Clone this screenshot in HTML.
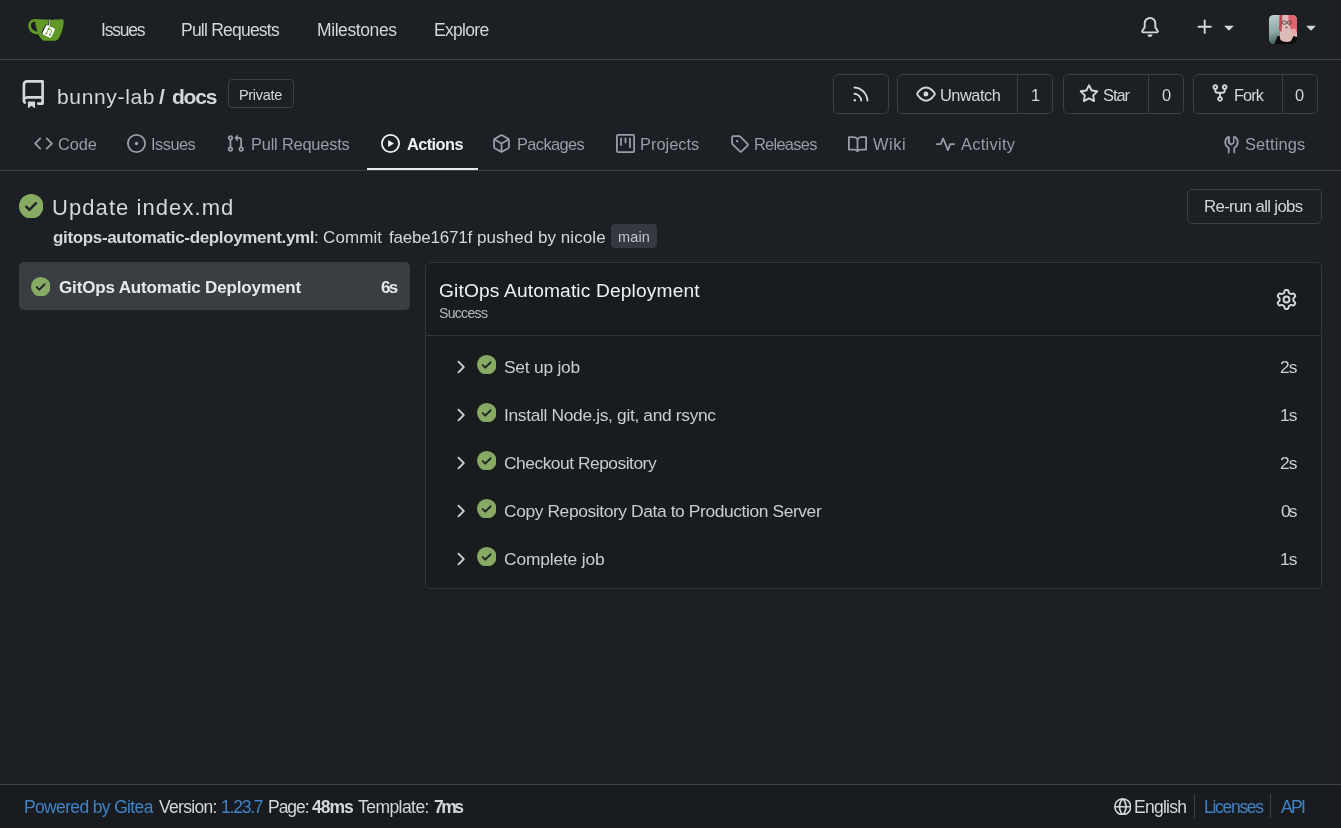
<!DOCTYPE html>
<html><head><meta charset="utf-8"><title>Update index.md - docs - Gitea</title>
<style>
html,body{margin:0;padding:0;width:1341px;height:828px;overflow:hidden;background:#1c1f23;}
body{position:relative;font-family:"Liberation Sans",sans-serif;}
.t{position:absolute;white-space:pre;line-height:1;will-change:transform;}
.b{position:absolute;}
.i{position:absolute;display:block;}
</style></head><body>
<div class="b" style="left:0px;top:0px;width:1341px;height:59px;background:#1c1f23;border-radius:0px;"></div>
<div class="b" style="left:0px;top:59px;width:1341px;height:1px;background:#3a4048;border-radius:0px;"></div>
<div class="b" style="left:0px;top:170px;width:1341px;height:1px;background:#3a4048;border-radius:0px;"></div>
<div class="b" style="left:367px;top:167.5px;width:111px;height:2.5px;background:#e6e9ec;border-radius:0px;"></div>
<div class="b" style="left:0px;top:784px;width:1341px;height:44px;background:#181b1f;border-radius:0px;"></div>
<div class="b" style="left:0px;top:784px;width:1341px;height:1px;background:#3a4048;border-radius:0px;"></div>
<svg class="i" style="left:27.8px;top:10.9px" width="36" height="36" viewBox="0 0 640 640"><path fill="#fff" d="m395.9 484.2-126.9-61c-12.5-6-17.9-21.2-11.8-33.8l61-126.9c6-12.5 21.2-17.9 33.8-11.8 17.2 8.3 27.1 13 27.1 13l-.1-109.2 16.7-.1.1 117.1s57.4 24.2 83.1 40.1c3.7 2.3 10.2 6.8 12.9 14.4 2.1 6.1 2 13.1-1 19.3l-61 126.9c-6.2 12.7-21.4 18.1-33.9 12"/><path fill="#609926" d="M622.7 149.8c-4.1-4.1-9.6-4-9.6-4s-117.2 6.6-177.9 8c-13.3.3-26.5.6-39.6.7v117.2c-5.5-2.6-11.1-5.3-16.6-7.900 0-36.4-.1-109.2-.1-109.2-29 .4-89.2-2.2-89.2-2.2s-141.4-7.1-156.8-8.5c-9.8-.6-22.5-2.1-39 1.5-8.7 1.8-33.5 7.4-53.8 26.9C-4.9 212.4 6.6 276.2 8 285.8c1.7 11.7 6.9 44.2 31.7 72.5 45.8 56.1 144.4 54.8 144.4 54.8s12.1 28.9 30.6 55.5c25 33.1 50.7 58.9 75.7 62 63 0 188.9-.1 188.9-.1s12 .1 28.3-10.3c14-8.5 26.5-23.4 26.5-23.4S547 483 565 451.5c5.5-9.7 10.1-19.1 14.1-28 0 0 55.2-117.1 55.2-231.1-1.1-34.5-9.6-40.6-11.6-42.6M125.6 353.9c-25.9-8.5-36.9-18.7-36.9-18.7S69.6 321.8 60 295.4c-16.5-44.2-1.4-71.2-1.4-71.2s8.4-22.5 38.5-30c13.8-3.7 31-3.1 31-3.1s7.1 59.4 15.7 94.2c7.2 29.2 24.8 77.7 24.8 77.7s-26.1-3.1-43-9.1m289.8 107.9c-6.2 12.7-21.4 18.1-33.9 12l-126.9-61c-12.5-6-17.9-21.2-11.8-33.8l61-126.9c6-12.5 21.2-17.9 33.8-11.8 17.2 8.3 27.1 13 27.1 13l-.1-109.2 16.7-.1.1 117.1s57.4 24.2 83.1 40.1c3.7 2.3 10.2 6.8 12.9 14.4 2.1 6.1 2 13.1-1 19.3z"/><path fill="#609926" d="M326.8 380.1c-8.2.1-15.4 5.8-17.3 13.8s2 16.3 9.1 20c7.7 4 17.5 1.8 22.7-5.4 5.1-7.1 4.3-16.9-1.8-23.1l24-49.1c1.5.1 3.7.2 6.2-.5 4.1-.9 7.1-3.6 7.1-3.6 4.2 1.8 8.6 3.8 13.2 6.1 4.8 2.4 9.3 4.9 13.4 7.3.9.5 1.8 1.1 2.8 1.9 1.6 1.3 3.4 3.1 4.7 5.5 1.9 5.5-1.9 14.9-1.9 14.9-2.3 7.6-18.4 40.6-18.4 40.6-8.1-.2-15.3 5-17.7 12.5-2.6 8.1 1.1 17.3 8.9 21.3s17.4 1.7 22.5-5.3c5-6.8 4.6-16.3-1.1-22.6 1.9-3.7 3.7-7.4 5.6-11.3 5-10.4 13.5-30.4 13.5-30.4.9-1.7 5.7-10.3 2.7-21.3-2.5-11.4-12.6-16.7-12.6-16.7-12.2-7.9-29.2-15.2-29.2-15.2s0-4.1-1.1-7.1-2.8-5.1-3.9-6.3c4.7-9.7 9.4-19.3 14.1-29-4.1-2-8.1-4-12.2-6.1-4.8 9.8-9.7 19.7-14.5 29.5-6.7-.1-12.9 3.5-16.1 9.4-3.4 6.3-2.7 14.1 1.9 19.8z"/></svg>
<svg class="i" style="left:1269px;top:15px" width="28" height="29" viewBox="0 0 28 29">
<defs><clipPath id="av"><rect x="0" y="0" width="28" height="29" rx="4.5"/></clipPath>
<linearGradient id="avbg" x1="0" y1="0" x2="0.3" y2="1"><stop offset="0" stop-color="#c0d2d0"/><stop offset="0.6" stop-color="#8aa6a3"/><stop offset="1" stop-color="#3e5654"/></linearGradient>
<filter id="avb" x="-20%" y="-20%" width="140%" height="140%"><feGaussianBlur stdDeviation="0.6"/></filter></defs>
<g clip-path="url(#av)">
<rect width="28" height="29" fill="url(#avbg)"/>
<g filter="url(#avb)">
<rect x="11" y="-2" width="19" height="33" fill="#dcbcb6"/>
<path d="M10.5 0 L13.5 0 L12.5 17 L10 15 Z" fill="#b84858"/>
<path d="M19 -1 L28 -1 L28 17 L24 18 L20 10 Z" fill="#e0636e"/>
<ellipse cx="25" cy="17" rx="2.5" ry="3.5" fill="#e9a8ae"/>
<ellipse cx="15.4" cy="7.6" rx="2.2" ry="1.7" fill="none" stroke="#3a3232" stroke-width="0.8"/>
<ellipse cx="20.4" cy="7.6" rx="2.2" ry="1.7" fill="none" stroke="#3a3232" stroke-width="0.8"/>
<ellipse cx="17.5" cy="12.5" rx="1.4" ry="0.7" fill="#80557a"/>
<path d="M5 30 L8.5 21 L10.5 21 L11.5 25 Q16 28.5 22 26 L24.5 21 L28 22 L28 30 Z" fill="#101010"/>
</g></g></svg>
<div class="b" style="left:227.5px;top:79.3px;width:66.10000000000002px;height:29.200000000000003px;background:transparent;border:1px solid #3a4048;box-sizing:border-box;border-radius:4px;"></div>
<div class="b" style="left:833px;top:74px;width:56px;height:40px;background:transparent;border:1px solid #3a4048;box-sizing:border-box;border-radius:5px;"></div>
<div class="b" style="left:897px;top:74px;width:156px;height:40px;background:transparent;border:1px solid #3a4048;box-sizing:border-box;border-radius:5px;"></div>
<div class="b" style="left:1017px;top:74px;width:1px;height:40px;background:#3a4048;border-radius:0px;"></div>
<div class="b" style="left:1062.5px;top:74px;width:121.5px;height:40px;background:transparent;border:1px solid #3a4048;box-sizing:border-box;border-radius:5px;"></div>
<div class="b" style="left:1148px;top:74px;width:1px;height:40px;background:#3a4048;border-radius:0px;"></div>
<div class="b" style="left:1193.3px;top:74px;width:124.70000000000005px;height:40px;background:transparent;border:1px solid #3a4048;box-sizing:border-box;border-radius:5px;"></div>
<div class="b" style="left:1281.5px;top:74px;width:1.0px;height:40px;background:#3a4048;border-radius:0px;"></div>
<div class="b" style="left:1187px;top:188.5px;width:135px;height:35.5px;background:transparent;border:1px solid #3a4048;box-sizing:border-box;border-radius:5px;"></div>
<div class="b" style="left:611px;top:224px;width:46px;height:24px;background:#353a42;border-radius:4px;"></div>
<svg class="i" style="left:18.75px;top:193.75px" width="24.5" height="24.5" viewBox="0 0 16 16"><circle cx="8" cy="8" r="8" fill="#87ab63"/><path fill="none" stroke="#1f2328" stroke-width="1.6" stroke-linecap="round" stroke-linejoin="round" d="M4.7 8.3l2.1 2.1 4.3-4.4"/></svg>
<div class="b" style="left:19px;top:262px;width:391px;height:48px;background:#3a3e42;border-radius:5px;"></div>
<svg class="i" style="left:30.75px;top:276.75px" width="19.5" height="19.5" viewBox="0 0 16 16"><circle cx="8" cy="8" r="8" fill="#87ab63"/><path fill="none" stroke="#1f2328" stroke-width="1.6" stroke-linecap="round" stroke-linejoin="round" d="M4.7 8.3l2.1 2.1 4.3-4.4"/></svg>
<div class="b" style="left:425px;top:262px;width:897px;height:327px;background:#191c1f;border:1px solid #30343b;box-sizing:border-box;border-radius:5px;"></div>
<div class="b" style="left:426px;top:335px;width:895px;height:1px;background:#30343b;border-radius:0px;"></div>
<svg class="i" style="left:476.75px;top:354.75px" width="19.5" height="19.5" viewBox="0 0 16 16"><circle cx="8" cy="8" r="8" fill="#87ab63"/><path fill="none" stroke="#1f2328" stroke-width="1.6" stroke-linecap="round" stroke-linejoin="round" d="M4.7 8.3l2.1 2.1 4.3-4.4"/></svg>
<svg class="i" style="left:476.75px;top:402.75px" width="19.5" height="19.5" viewBox="0 0 16 16"><circle cx="8" cy="8" r="8" fill="#87ab63"/><path fill="none" stroke="#1f2328" stroke-width="1.6" stroke-linecap="round" stroke-linejoin="round" d="M4.7 8.3l2.1 2.1 4.3-4.4"/></svg>
<svg class="i" style="left:476.75px;top:450.75px" width="19.5" height="19.5" viewBox="0 0 16 16"><circle cx="8" cy="8" r="8" fill="#87ab63"/><path fill="none" stroke="#1f2328" stroke-width="1.6" stroke-linecap="round" stroke-linejoin="round" d="M4.7 8.3l2.1 2.1 4.3-4.4"/></svg>
<svg class="i" style="left:476.75px;top:498.75px" width="19.5" height="19.5" viewBox="0 0 16 16"><circle cx="8" cy="8" r="8" fill="#87ab63"/><path fill="none" stroke="#1f2328" stroke-width="1.6" stroke-linecap="round" stroke-linejoin="round" d="M4.7 8.3l2.1 2.1 4.3-4.4"/></svg>
<svg class="i" style="left:476.75px;top:546.75px" width="19.5" height="19.5" viewBox="0 0 16 16"><circle cx="8" cy="8" r="8" fill="#87ab63"/><path fill="none" stroke="#1f2328" stroke-width="1.6" stroke-linecap="round" stroke-linejoin="round" d="M4.7 8.3l2.1 2.1 4.3-4.4"/></svg>
<div class="b" style="left:1193.5px;top:794px;width:1.0px;height:23.5px;background:#3b4048;border-radius:0px;"></div>
<div class="b" style="left:1270px;top:794px;width:1px;height:23.5px;background:#3b4048;border-radius:0px;"></div>
<svg class="i" style="left:1139.50px;top:17.35px" width="20" height="20" viewBox="0 0 16 16"><path fill="#d2d7db" d="M8 16a2 2 0 0 0 1.985-1.75c.017-.137-.097-.25-.235-.25h-3.5c-.138 0-.252.113-.235.25A2 2 0 0 0 8 16ZM3 5a5 5 0 0 1 10 0v2.947c0 .05.015.098.042.139l1.703 2.555A1.519 1.519 0 0 1 13.482 13H2.518a1.516 1.516 0 0 1-1.263-2.36l1.703-2.554A.255.255 0 0 0 3 7.947Zm5-3.5A3.5 3.5 0 0 0 4.5 5v2.947c0 .346-.102.683-.294.97l-1.703 2.556a.017.017 0 0 0-.003.01l.001.006c0 .002.002.004.004.006l.006.004.007.001h10.964l.007-.001.006-.004.004-.006.001-.007a.017.017 0 0 0-.003-.01l-1.703-2.554a1.745 1.745 0 0 1-.294-.97V5A3.5 3.5 0 0 0 8 1.5Z"/></svg>
<svg class="i" style="left:1195.45px;top:17.30px" width="20" height="20" viewBox="0 0 16 16"><path fill="#d2d7db" d="M7.75 2a.75.75 0 0 1 .75.75V7h4.25a.75.75 0 0 1 0 1.5H8.5v4.25a.75.75 0 0 1-1.5 0V8.5H2.75a.75.75 0 0 1 0-1.5H7V2.75A.75.75 0 0 1 7.75 2Z"/></svg>
<svg class="i" style="left:1219.10px;top:17.45px" width="20" height="20" viewBox="0 0 16 16"><path fill="#d2d7db" d="m4.427 7.427 3.396 3.396a.25.25 0 0 0 .354 0l3.396-3.396A.25.25 0 0 0 11.396 7H4.604a.25.25 0 0 0-.177.427Z"/></svg>
<svg class="i" style="left:1300.75px;top:17.45px" width="20" height="20" viewBox="0 0 16 16"><path fill="#d2d7db" d="m4.427 7.427 3.396 3.396a.25.25 0 0 0 .354 0l3.396-3.396A.25.25 0 0 0 11.396 7H4.604a.25.25 0 0 0-.177.427Z"/></svg>
<svg class="i" style="left:19.25px;top:79.71px" width="28.5" height="28.5" viewBox="0 0 16 16"><path fill="#d2d7db" d="M2 2.5A2.5 2.5 0 0 1 4.5 0h8.75a.75.75 0 0 1 .75.75v12.5a.75.75 0 0 1-.75.75h-2.5a.75.75 0 0 1 0-1.5h1.75v-2h-8a1 1 0 0 0-.714 1.7.75.75 0 1 1-1.072 1.05A2.495 2.495 0 0 1 2 11.5Zm10.5-1h-8a1 1 0 0 0-1 1v6.708A2.486 2.486 0 0 1 4.5 9h8ZM5 12.25a.25.25 0 0 1 .25-.25h3.5a.25.25 0 0 1 .25.25v3.25a.25.25 0 0 1-.4.2l-1.45-1.087a.25.25 0 0 0-.3 0L5.4 15.7a.25.25 0 0 1-.4-.2Z"/></svg>
<svg class="i" style="left:851.12px;top:83.75px" width="20" height="20" viewBox="0 0 16 16"><path fill="#d2d7db" d="M2.002 2.725a.75.75 0 0 1 .797-.699C8.79 2.42 13.58 7.21 13.974 13.201a.75.75 0 0 1-1.497.098 10.502 10.502 0 0 0-9.776-9.776.747.747 0 0 1-.7-.798ZM2.84 7.05h-.002a7.002 7.002 0 0 1 6.113 6.111.75.75 0 0 1-1.49.178 5.503 5.503 0 0 0-4.8-4.8.75.75 0 0 1 .179-1.489ZM2 13a1 1 0 1 1 2 0 1 1 0 0 1-2 0Z"/></svg>
<svg class="i" style="left:915.65px;top:83.70px" width="20" height="20" viewBox="0 0 16 16"><path fill="#d2d7db" d="M8 2c1.981 0 3.671.992 4.933 2.078 1.27 1.091 2.187 2.345 2.637 3.023a1.62 1.62 0 0 1 0 1.798c-.45.678-1.367 1.932-2.637 3.023C11.67 13.008 9.981 14 8 14c-1.981 0-3.671-.992-4.933-2.078C1.797 10.83.88 9.576.43 8.898a1.62 1.62 0 0 1 0-1.798c.45-.677 1.367-1.931 2.637-3.022C4.33 2.992 6.019 2 8 2ZM1.679 7.932a.12.12 0 0 0 0 .136c.411.622 1.241 1.75 2.366 2.717C5.176 11.758 6.527 12.5 8 12.5c1.473 0 2.825-.742 3.955-1.715 1.124-.967 1.954-2.096 2.366-2.717a.12.12 0 0 0 0-.136c-.412-.621-1.242-1.75-2.366-2.717C10.824 4.242 9.473 3.5 8 3.5c-1.473 0-2.825.742-3.955 1.715-1.124.967-1.954 2.096-2.366 2.717ZM8 10a2 2 0 1 1-.001-3.999A2 2 0 0 1 8 10Z"/></svg>
<svg class="i" style="left:1079.45px;top:83.67px" width="20" height="20" viewBox="0 0 16 16"><path fill="#d2d7db" d="M8 .25a.75.75 0 0 1 .673.418l1.882 3.815 4.21.612a.75.75 0 0 1 .416 1.279l-3.046 2.97.719 4.192a.751.751 0 0 1-1.088.791L8 12.347l-3.766 1.98a.75.75 0 0 1-1.088-.79l.72-4.194L.818 6.374a.75.75 0 0 1 .416-1.28l4.21-.611L7.327.668A.75.75 0 0 1 8 .25Zm0 2.445L6.615 5.5a.75.75 0 0 1-.564.41l-3.097.45 2.24 2.184a.75.75 0 0 1 .216.664l-.528 3.084 2.769-1.456a.75.75 0 0 1 .698 0l2.77 1.456-.53-3.084a.75.75 0 0 1 .216-.664l2.24-2.183-3.096-.45a.75.75 0 0 1-.564-.41L8 2.694Z"/></svg>
<svg class="i" style="left:1210.45px;top:83.45px" width="20" height="20" viewBox="0 0 16 16"><path fill="#d2d7db" d="M5 5.372v.878c0 .414.336.75.75.75h4.5a.75.75 0 0 0 .75-.75v-.878a2.25 2.25 0 1 1 1.5 0v.878a2.25 2.25 0 0 1-2.25 2.25h-1.5v2.128a2.251 2.251 0 1 1-1.5 0V8.5h-1.5A2.25 2.25 0 0 1 3.5 6.25v-.878a2.25 2.25 0 1 1 1.5 0ZM5 3.25a.75.75 0 1 0-1.5 0 .75.75 0 0 0 1.5 0Zm6.75.75a.75.75 0 1 0 0-1.5.75.75 0 0 0 0 1.5Zm-3 8.75a.75.75 0 1 0-1.5 0 .75.75 0 0 0 1.5 0Z"/></svg>
<svg class="i" style="left:34.00px;top:134.15px" width="19" height="19" viewBox="0 0 16 16"><path fill="#979ea8" d="m11.28 3.22 4.25 4.25a.75.75 0 0 1 0 1.06l-4.25 4.25a.749.749 0 0 1-1.275-.326.749.749 0 0 1 .215-.734L13.94 8l-3.72-3.72a.749.749 0 0 1 .326-1.275.749.749 0 0 1 .734.215Zm-6.56 0a.751.751 0 0 1 1.042.018.751.751 0 0 1 .018 1.042L2.06 8l3.72 3.72a.749.749 0 0 1-.326 1.275.749.749 0 0 1-.734-.215L.47 8.53a.75.75 0 0 1 0-1.06Z"/></svg>
<svg class="i" style="left:126.90px;top:134.30px" width="19" height="19" viewBox="0 0 16 16"><path fill="#979ea8" d="M8 9.5a1.5 1.5 0 1 0 0-3 1.5 1.5 0 0 0 0 3ZM8 0a8 8 0 1 1 0 16A8 8 0 0 1 8 0ZM1.5 8a6.5 6.5 0 1 0 13 0 6.5 6.5 0 0 0-13 0Z"/></svg>
<svg class="i" style="left:226.22px;top:134.39px" width="19" height="19" viewBox="0 0 16 16"><path fill="#979ea8" d="M1.5 3.25a2.25 2.25 0 1 1 3 2.122v5.256a2.251 2.251 0 1 1-1.5 0V5.372A2.25 2.25 0 0 1 1.5 3.25Zm5.677-.177L9.573.677A.25.25 0 0 1 10 .854V2.5h1A2.5 2.5 0 0 1 13.5 5v5.628a2.251 2.251 0 1 1-1.5 0V5a1 1 0 0 0-1-1h-1v1.646a.25.25 0 0 1-.427.177L7.177 3.427a.25.25 0 0 1 0-.354ZM3.75 2.5a.75.75 0 1 0 0 1.5.75.75 0 0 0 0-1.5Zm0 9.5a.75.75 0 1 0 0 1.5.75.75 0 0 0 0-1.5Zm8.25.75a.75.75 0 1 0 1.5 0 .75.75 0 0 0-1.5 0Z"/></svg>
<svg class="i" style="left:380.95px;top:134.35px" width="19" height="19" viewBox="0 0 16 16"><path fill="#eef0f2" d="M8 0a8 8 0 1 1 0 16A8 8 0 0 1 8 0ZM1.5 8a6.5 6.5 0 1 0 13 0 6.5 6.5 0 0 0-13 0Zm4.879-2.773 4.264 2.559a.25.25 0 0 1 0 .428l-4.264 2.559A.25.25 0 0 1 6 10.559V5.442a.25.25 0 0 1 .379-.215Z"/></svg>
<svg class="i" style="left:491.90px;top:134.35px" width="19" height="19" viewBox="0 0 16 16"><path fill="#979ea8" d="m8.878.392 5.25 3.045c.54.314.872.89.872 1.514v6.098a1.75 1.75 0 0 1-.872 1.514l-5.25 3.045a1.75 1.75 0 0 1-1.756 0l-5.25-3.045A1.75 1.75 0 0 1 1 11.049V4.951c0-.624.332-1.201.872-1.514L7.122.392a1.75 1.75 0 0 1 1.756 0ZM7.875 1.69l-4.63 2.685L8 7.133l4.755-2.758-4.63-2.685a.248.248 0 0 0-.25 0ZM2.5 5.677v5.372c0 .09.047.171.125.216l4.625 2.683V8.432Zm6.25 8.271 4.625-2.683a.25.25 0 0 0 .125-.216V5.677L8.75 8.432Z"/></svg>
<svg class="i" style="left:615.55px;top:134.40px" width="19" height="19" viewBox="0 0 16 16"><path fill="#979ea8" d="M1.75 0h12.5C15.216 0 16 .784 16 1.75v12.5A1.75 1.75 0 0 1 14.25 16H1.75A1.75 1.75 0 0 1 0 14.25V1.75C0 .784.784 0 1.75 0ZM1.5 1.75v12.5c0 .138.112.25.25.25h12.5a.25.25 0 0 0 .25-.25V1.75a.25.25 0 0 0-.25-.25H1.75a.25.25 0 0 0-.25.25ZM11.75 3a.75.75 0 0 1 .75.75v7.5a.75.75 0 0 1-1.5 0v-7.5a.75.75 0 0 1 .75-.75Zm-8.25.75a.75.75 0 0 1 1.5 0v5.5a.75.75 0 0 1-1.5 0ZM8 3a.75.75 0 0 1 .75.75v3.5a.75.75 0 0 1-1.5 0v-3.5A.75.75 0 0 1 8 3Z"/></svg>
<svg class="i" style="left:730.00px;top:133.92px" width="19" height="19" viewBox="0 0 16 16"><path fill="#979ea8" d="M1 7.775V2.75C1 1.784 1.784 1 2.75 1h5.025c.464 0 .91.184 1.238.513l6.25 6.25a1.75 1.75 0 0 1 0 2.474l-5.026 5.026a1.75 1.75 0 0 1-2.474 0l-6.25-6.25A1.752 1.752 0 0 1 1 7.775Zm1.5 0c0 .066.026.13.073.177l6.25 6.25a.25.25 0 0 0 .354 0l5.025-5.025a.25.25 0 0 0 0-.354l-6.25-6.25a.25.25 0 0 0-.177-.073H2.75a.25.25 0 0 0-.25.25ZM6 5a1 1 0 1 1 0 2 1 1 0 0 1 0-2Z"/></svg>
<svg class="i" style="left:848.05px;top:134.68px" width="19" height="19" viewBox="0 0 16 16"><path fill="#979ea8" d="M0 1.75A.75.75 0 0 1 .75 1h4.253c1.227 0 2.317.59 3 1.501A3.743 3.743 0 0 1 11.006 1h4.245a.75.75 0 0 1 .75.75v10.5a.75.75 0 0 1-.75.75h-4.507a2.25 2.25 0 0 0-1.591.659l-.622.621a.75.75 0 0 1-1.06 0l-.622-.621A2.25 2.25 0 0 0 5.258 13H.75a.75.75 0 0 1-.75-.75Zm7.251 10.324.004-5.073-.002-2.253A2.25 2.25 0 0 0 5.003 2.5H1.5v9h3.757a3.75 3.75 0 0 1 1.994.574ZM8.755 4.75l-.004 7.322a3.752 3.752 0 0 1 1.992-.572H14.5v-9h-3.495a2.25 2.25 0 0 0-2.25 2.25Z"/></svg>
<svg class="i" style="left:935.95px;top:134.68px" width="19" height="19" viewBox="0 0 16 16"><path fill="#979ea8" d="M6 2c.306 0 .582.187.696.471L10 10.731l1.304-3.26A.751.751 0 0 1 12 7h3.25a.75.75 0 0 1 0 1.5h-2.742l-1.812 4.528a.751.751 0 0 1-1.392 0L6 4.77 4.696 8.03A.75.75 0 0 1 4 8.5H.75a.75.75 0 0 1 0-1.5h2.742l1.812-4.529A.751.751 0 0 1 6 2Z"/></svg>
<svg class="i" style="left:1221.75px;top:134.54px" width="19" height="19" viewBox="0 0 16 16"><path fill="#979ea8" d="M5.433 2.304A4.492 4.492 0 0 0 3.5 6c0 1.598.832 3.002 2.09 3.802.518.328.929.923.902 1.64v.008l-.164 3.337a.75.75 0 1 1-1.498-.073l.163-3.33c.002-.085-.05-.216-.207-.316A5.996 5.996 0 0 1 2 6a5.993 5.993 0 0 1 2.567-4.92 1.482 1.482 0 0 1 .232-.13 1.4 1.4 0 0 1 1.39.16c.336.233.53.612.53 1.022V6.19l1.282.98 1.28-.98V2.13c0-.41.195-.79.53-1.022a1.4 1.4 0 0 1 1.39-.16c.09.038.17.084.233.13A5.993 5.993 0 0 1 14 6a5.996 5.996 0 0 1-2.783 5.068c-.157.1-.209.231-.207.316l.163 3.33a.75.75 0 1 1-1.498.073l-.164-3.337v-.008c-.027-.717.384-1.312.902-1.64A4.495 4.495 0 0 0 12.5 6a4.492 4.492 0 0 0-1.933-3.696c-.024.017-.067.067-.067.13v3.94a.75.75 0 0 1-.294.596L8.172 8.658a.75.75 0 0 1-.917 0L5.22 7.066a.75.75 0 0 1-.294-.596v-3.94c0-.063-.043-.113-.067-.13Z"/></svg>
<svg class="i" style="left:1276.45px;top:289.00px" width="21" height="21" viewBox="0 0 16 16"><path fill="#d2d7db" d="M8 0a8.2 8.2 0 0 1 .701.031C9.444.095 9.99.645 10.16 1.29l.288 1.107c.018.066.079.158.212.224.231.114.454.243.668.386.123.082.233.09.299.071l1.103-.303c.644-.176 1.392.021 1.82.63.27.385.506.792.704 1.218.315.675.111 1.422-.364 1.891l-.814.806c-.049.048-.098.147-.088.294.016.257.016.515 0 .772-.01.147.038.246.088.294l.814.806c.475.469.679 1.216.364 1.891a7.977 7.977 0 0 1-.704 1.217c-.428.61-1.176.807-1.82.63l-1.102-.302c-.067-.019-.177-.011-.3.071a5.909 5.909 0 0 1-.668.386c-.133.066-.194.158-.211.224l-.29 1.106c-.168.646-.715 1.196-1.458 1.26a8.006 8.006 0 0 1-1.402 0c-.743-.064-1.289-.614-1.458-1.26l-.289-1.106c-.018-.066-.079-.158-.212-.224a5.738 5.738 0 0 1-.668-.386c-.123-.082-.233-.09-.299-.071l-1.103.303c-.644.176-1.392-.021-1.82-.63a8.12 8.12 0 0 1-.704-1.218c-.315-.675-.111-1.422.363-1.891l.815-.806c.05-.048.098-.147.088-.294a6.214 6.214 0 0 1 0-.772c.01-.147-.038-.246-.088-.294l-.815-.806C.635 6.045.431 5.298.746 4.623a7.92 7.92 0 0 1 .704-1.217c.428-.61 1.176-.807 1.82-.63l1.102.302c.067.019.177.011.3-.071.214-.143.437-.272.668-.386.133-.066.194-.158.211-.224l.29-1.106C6.009.645 6.556.095 7.299.03 7.53.01 7.764 0 8 0Zm-.571 1.525c-.036.003-.108.036-.137.146l-.289 1.105c-.147.561-.549.967-.998 1.189-.173.086-.34.183-.5.29-.417.278-.97.423-1.529.27l-1.103-.303c-.109-.03-.175.016-.195.045-.22.312-.412.644-.573.99-.014.031-.021.11.059.19l.815.806c.411.406.562.957.53 1.456a4.709 4.709 0 0 0 0 .582c.032.499-.119 1.05-.53 1.456l-.815.806c-.081.08-.073.159-.059.19.162.346.353.677.573.989.02.03.085.076.195.046l1.102-.303c.56-.153 1.113-.008 1.53.27.161.107.328.204.501.29.447.222.85.629.997 1.189l.289 1.105c.029.109.101.143.137.146a6.6 6.6 0 0 0 1.142 0c.036-.003.108-.036.137-.146l.289-1.105c.147-.561.549-.967.998-1.189.173-.086.34-.183.5-.29.417-.278.97-.423 1.529-.27l1.103.303c.109.029.175-.016.195-.045.22-.313.411-.644.573-.99.014-.031.021-.11-.059-.19l-.815-.806c-.411-.406-.562-.957-.53-1.456a4.709 4.709 0 0 0 0-.582c-.032-.499.119-1.05.53-1.456l.815-.806c.081-.08.073-.159.059-.19a6.464 6.464 0 0 0-.573-.989c-.02-.03-.085-.076-.195-.046l-1.102.303c-.56.153-1.113.008-1.53-.27a4.44 4.44 0 0 0-.501-.29c-.447-.222-.85-.629-.997-1.189l-.289-1.105c-.029-.11-.101-.143-.137-.146a6.6 6.6 0 0 0-1.142 0ZM11 8a3 3 0 1 1-6 0 3 3 0 0 1 6 0ZM9.5 8a1.5 1.5 0 1 0-3.001.001A1.5 1.5 0 0 0 9.5 8Z"/></svg>
<svg class="i" style="left:1113.70px;top:797.90px" width="17.5" height="17.5" viewBox="0 0 16 16"><path fill="#d2d7db" d="M8 0a8 8 0 1 1 0 16A8 8 0 0 1 8 0ZM5.78 8.75a9.64 9.64 0 0 0 1.363 4.177c.255.426.542.832.857 1.215.245-.296.551-.705.857-1.215A9.64 9.64 0 0 0 10.22 8.75Zm4.44-1.5a9.64 9.64 0 0 0-1.363-4.177c-.307-.51-.612-.919-.857-1.215a9.927 9.927 0 0 0-.857 1.215A9.64 9.64 0 0 0 5.78 7.25Zm-5.944 1.5H1.543a6.507 6.507 0 0 0 4.666 5.5c-.123-.181-.24-.365-.352-.552-.715-1.192-1.437-2.874-1.581-4.948Zm-2.733-1.5h2.733c.144-2.074.866-3.756 1.58-4.948.12-.197.237-.381.353-.552a6.507 6.507 0 0 0-4.666 5.5Zm10.181 1.5c-.144 2.074-.866 3.756-1.58 4.948-.12.197-.237.381-.353.552a6.507 6.507 0 0 0 4.666-5.5Zm2.733-1.5a6.507 6.507 0 0 0-4.666-5.5c.123.181.24.365.353.552.714 1.192 1.436 2.874 1.58 4.948Z"/></svg>
<svg class="i" style="left:449.53px;top:356.52px" width="20" height="20" viewBox="0 0 16 16"><path fill="#c9ced3" d="M6.22 3.22a.749.749 0 0 1 1.06 0l4.25 4.25a.749.749 0 0 1 0 1.06l-4.25 4.25a.749.749 0 0 1-1.275-.326.749.749 0 0 1 .215-.734L9.94 8 6.22 4.28a.749.749 0 0 1 0-1.06Z"/></svg>
<svg class="i" style="left:449.53px;top:404.52px" width="20" height="20" viewBox="0 0 16 16"><path fill="#c9ced3" d="M6.22 3.22a.749.749 0 0 1 1.06 0l4.25 4.25a.749.749 0 0 1 0 1.06l-4.25 4.25a.749.749 0 0 1-1.275-.326.749.749 0 0 1 .215-.734L9.94 8 6.22 4.28a.749.749 0 0 1 0-1.06Z"/></svg>
<svg class="i" style="left:449.53px;top:452.52px" width="20" height="20" viewBox="0 0 16 16"><path fill="#c9ced3" d="M6.22 3.22a.749.749 0 0 1 1.06 0l4.25 4.25a.749.749 0 0 1 0 1.06l-4.25 4.25a.749.749 0 0 1-1.275-.326.749.749 0 0 1 .215-.734L9.94 8 6.22 4.28a.749.749 0 0 1 0-1.06Z"/></svg>
<svg class="i" style="left:449.53px;top:500.52px" width="20" height="20" viewBox="0 0 16 16"><path fill="#c9ced3" d="M6.22 3.22a.749.749 0 0 1 1.06 0l4.25 4.25a.749.749 0 0 1 0 1.06l-4.25 4.25a.749.749 0 0 1-1.275-.326.749.749 0 0 1 .215-.734L9.94 8 6.22 4.28a.749.749 0 0 1 0-1.06Z"/></svg>
<svg class="i" style="left:449.53px;top:548.52px" width="20" height="20" viewBox="0 0 16 16"><path fill="#c9ced3" d="M6.22 3.22a.749.749 0 0 1 1.06 0l4.25 4.25a.749.749 0 0 1 0 1.06l-4.25 4.25a.749.749 0 0 1-1.275-.326.749.749 0 0 1 .215-.734L9.94 8 6.22 4.28a.749.749 0 0 1 0-1.06Z"/></svg>
<div class="t" id="t0" style="left:100.70px;top:21.91px;font-size:17.5px;letter-spacing:-1.200px;color:#d2d7db;">Issues</div>
<div class="t" id="t1" style="left:181.30px;top:21.91px;font-size:17.5px;letter-spacing:-0.775px;color:#d2d7db;">Pull Requests</div>
<div class="t" id="t2" style="left:316.60px;top:21.91px;font-size:17.5px;letter-spacing:-0.411px;color:#d2d7db;">Milestones</div>
<div class="t" id="t3" style="left:434.30px;top:21.91px;font-size:17.5px;letter-spacing:-0.700px;color:#d2d7db;">Explore</div>
<div class="t" id="t4" style="left:57.30px;top:85.75px;font-size:21px;letter-spacing:0.662px;color:#d2d7db;">bunny-lab</div>
<div class="t" id="t5" style="left:159.30px;top:85.75px;font-size:21px;letter-spacing:0.000px;color:#d2d7db;font-weight:700;">/</div>
<div class="t" id="t6" style="left:172.00px;top:85.75px;font-size:21px;letter-spacing:-1.233px;color:#d2d7db;font-weight:700;">docs</div>
<div class="t" id="t7" style="left:238.60px;top:87.85px;font-size:14.5px;letter-spacing:-0.317px;color:#d2d7db;">Private</div>
<div class="t" id="t8" style="left:939.50px;top:87.04px;font-size:16.4px;letter-spacing:-0.500px;color:#d2d7db;">Unwatch</div>
<div class="t" id="t9" style="left:1030.80px;top:87.04px;font-size:16.4px;letter-spacing:0.000px;color:#d2d7db;">1</div>
<div class="t" id="t10" style="left:1103.00px;top:87.04px;font-size:16.4px;letter-spacing:-1.000px;color:#d2d7db;">Star</div>
<div class="t" id="t11" style="left:1161.70px;top:87.04px;font-size:16.4px;letter-spacing:0.000px;color:#d2d7db;">0</div>
<div class="t" id="t12" style="left:1233.60px;top:87.04px;font-size:16.4px;letter-spacing:-0.933px;color:#d2d7db;">Fork</div>
<div class="t" id="t13" style="left:1295.00px;top:87.04px;font-size:16.4px;letter-spacing:0.000px;color:#d2d7db;">0</div>
<div class="t" id="t14" style="left:58.20px;top:136.14px;font-size:16.4px;letter-spacing:-0.067px;color:#979ea8;">Code</div>
<div class="t" id="t15" style="left:151.30px;top:136.14px;font-size:16.4px;letter-spacing:-0.520px;color:#979ea8;">Issues</div>
<div class="t" id="t16" style="left:250.80px;top:136.14px;font-size:16.4px;letter-spacing:-0.200px;color:#979ea8;">Pull Requests</div>
<div class="t" id="t17" style="left:406.90px;top:136.14px;font-size:16.4px;letter-spacing:-0.600px;color:#eef0f2;font-weight:700;">Actions</div>
<div class="t" id="t18" style="left:516.50px;top:136.14px;font-size:16.4px;letter-spacing:-0.600px;color:#979ea8;">Packages</div>
<div class="t" id="t19" style="left:640.00px;top:136.14px;font-size:16.4px;letter-spacing:0.000px;color:#979ea8;">Projects</div>
<div class="t" id="t20" style="left:754.20px;top:136.14px;font-size:16.4px;letter-spacing:-0.714px;color:#979ea8;">Releases</div>
<div class="t" id="t21" style="left:873.30px;top:136.14px;font-size:16.4px;letter-spacing:0.600px;color:#979ea8;">Wiki</div>
<div class="t" id="t22" style="left:961.00px;top:136.14px;font-size:16.4px;letter-spacing:0.286px;color:#979ea8;">Activity</div>
<div class="t" id="t23" style="left:1245.00px;top:136.14px;font-size:16.4px;letter-spacing:0.143px;color:#979ea8;">Settings</div>
<div class="t" id="t24" style="left:51.60px;top:197.41px;font-size:22px;letter-spacing:1.071px;color:#d2d7db;">Update index.md</div>
<div class="t" id="t25" style="left:1204.00px;top:199.00px;font-size:16.8px;letter-spacing:-0.643px;color:#d2d7db;">Re-run all jobs</div>
<div class="t" id="t26" style="left:53.30px;top:228.53px;font-size:17px;letter-spacing:-0.350px;color:#d2d7db;font-weight:700;">gitops-automatic-deployment.yml</div>
<div class="t" id="t27" style="left:314.20px;top:228.53px;font-size:17px;letter-spacing:0.000px;color:#d2d7db;">:</div>
<div class="t" id="t28" style="left:323.40px;top:228.53px;font-size:17px;letter-spacing:0.100px;color:#d2d7db;">Commit</div>
<div class="t" id="t29" style="left:389.40px;top:228.53px;font-size:17px;letter-spacing:-0.200px;color:#d2d7db;">faebe1671f</div>
<div class="t" id="t30" style="left:477.30px;top:228.53px;font-size:17px;letter-spacing:0.067px;color:#d2d7db;">pushed by nicole</div>
<div class="t" id="t31" style="left:617.60px;top:229.65px;font-size:14.5px;letter-spacing:0.133px;color:#bfc5cc;">main</div>
<div class="t" id="t32" style="left:59.00px;top:278.83px;font-size:17px;letter-spacing:-0.146px;color:#e6e9ec;font-weight:700;">GitOps Automatic Deployment</div>
<div class="t" id="t33" style="left:381.20px;top:278.83px;font-size:17px;letter-spacing:-1.600px;color:#e6e9ec;font-weight:700;">6s</div>
<div class="t" id="t34" style="left:439.20px;top:280.68px;font-size:19.2px;letter-spacing:0.138px;color:#eef0f2;">GitOps Automatic Deployment</div>
<div class="t" id="t35" style="left:439.20px;top:306.07px;font-size:14px;letter-spacing:-0.667px;color:#b4bac1;">Success</div>
<div class="t" id="t36" style="left:504.40px;top:359.00px;font-size:17.4px;letter-spacing:-0.244px;color:#c9ced3;">Set up job</div>
<div class="t" id="t37" style="left:1280.00px;top:359.00px;font-size:17.4px;letter-spacing:-1.000px;color:#c9ced3;">2s</div>
<div class="t" id="t38" style="left:504.40px;top:407.00px;font-size:17.4px;letter-spacing:-0.343px;color:#c9ced3;">Install Node.js, git, and rsync</div>
<div class="t" id="t39" style="left:1280.00px;top:407.00px;font-size:17.4px;letter-spacing:-1.000px;color:#c9ced3;">1s</div>
<div class="t" id="t40" style="left:504.40px;top:455.00px;font-size:17.4px;letter-spacing:-0.489px;color:#c9ced3;">Checkout Repository</div>
<div class="t" id="t41" style="left:1280.00px;top:455.00px;font-size:17.4px;letter-spacing:-1.000px;color:#c9ced3;">2s</div>
<div class="t" id="t42" style="left:504.40px;top:503.00px;font-size:17.4px;letter-spacing:-0.395px;color:#c9ced3;">Copy Repository Data to Production Server</div>
<div class="t" id="t43" style="left:1281.00px;top:503.00px;font-size:17.4px;letter-spacing:-2.000px;color:#c9ced3;">0s</div>
<div class="t" id="t44" style="left:504.40px;top:551.00px;font-size:17.4px;letter-spacing:-0.164px;color:#c9ced3;">Complete job</div>
<div class="t" id="t45" style="left:1280.00px;top:551.00px;font-size:17.4px;letter-spacing:-1.000px;color:#c9ced3;">1s</div>
<div class="t" id="t46" style="left:23.70px;top:798.81px;font-size:17.5px;letter-spacing:-0.647px;color:#4183c4;">Powered by Gitea</div>
<div class="t" id="t47" style="left:158.50px;top:798.81px;font-size:17.5px;letter-spacing:-0.686px;color:#d2d7db;">Version:</div>
<div class="t" id="t48" style="left:221.00px;top:798.81px;font-size:17.5px;letter-spacing:-1.220px;color:#4183c4;">1.23.7</div>
<div class="t" id="t49" style="left:267.90px;top:798.81px;font-size:17.5px;letter-spacing:-1.025px;color:#d2d7db;">Page:</div>
<div class="t" id="t50" style="left:312.10px;top:798.81px;font-size:17.5px;letter-spacing:-1.000px;color:#d2d7db;font-weight:700;">48ms</div>
<div class="t" id="t51" style="left:358.00px;top:798.81px;font-size:17.5px;letter-spacing:-0.550px;color:#d2d7db;">Template:</div>
<div class="t" id="t52" style="left:433.50px;top:798.81px;font-size:17.5px;letter-spacing:-2.550px;color:#d2d7db;font-weight:700;">7ms</div>
<div class="t" id="t53" style="left:1134.30px;top:798.81px;font-size:17.5px;letter-spacing:-0.733px;color:#d2d7db;">English</div>
<div class="t" id="t54" style="left:1203.70px;top:798.81px;font-size:17.5px;letter-spacing:-1.286px;color:#4183c4;">Licenses</div>
<div class="t" id="t55" style="left:1281.00px;top:798.81px;font-size:17.5px;letter-spacing:-1.700px;color:#4183c4;">API</div>
</body></html>
